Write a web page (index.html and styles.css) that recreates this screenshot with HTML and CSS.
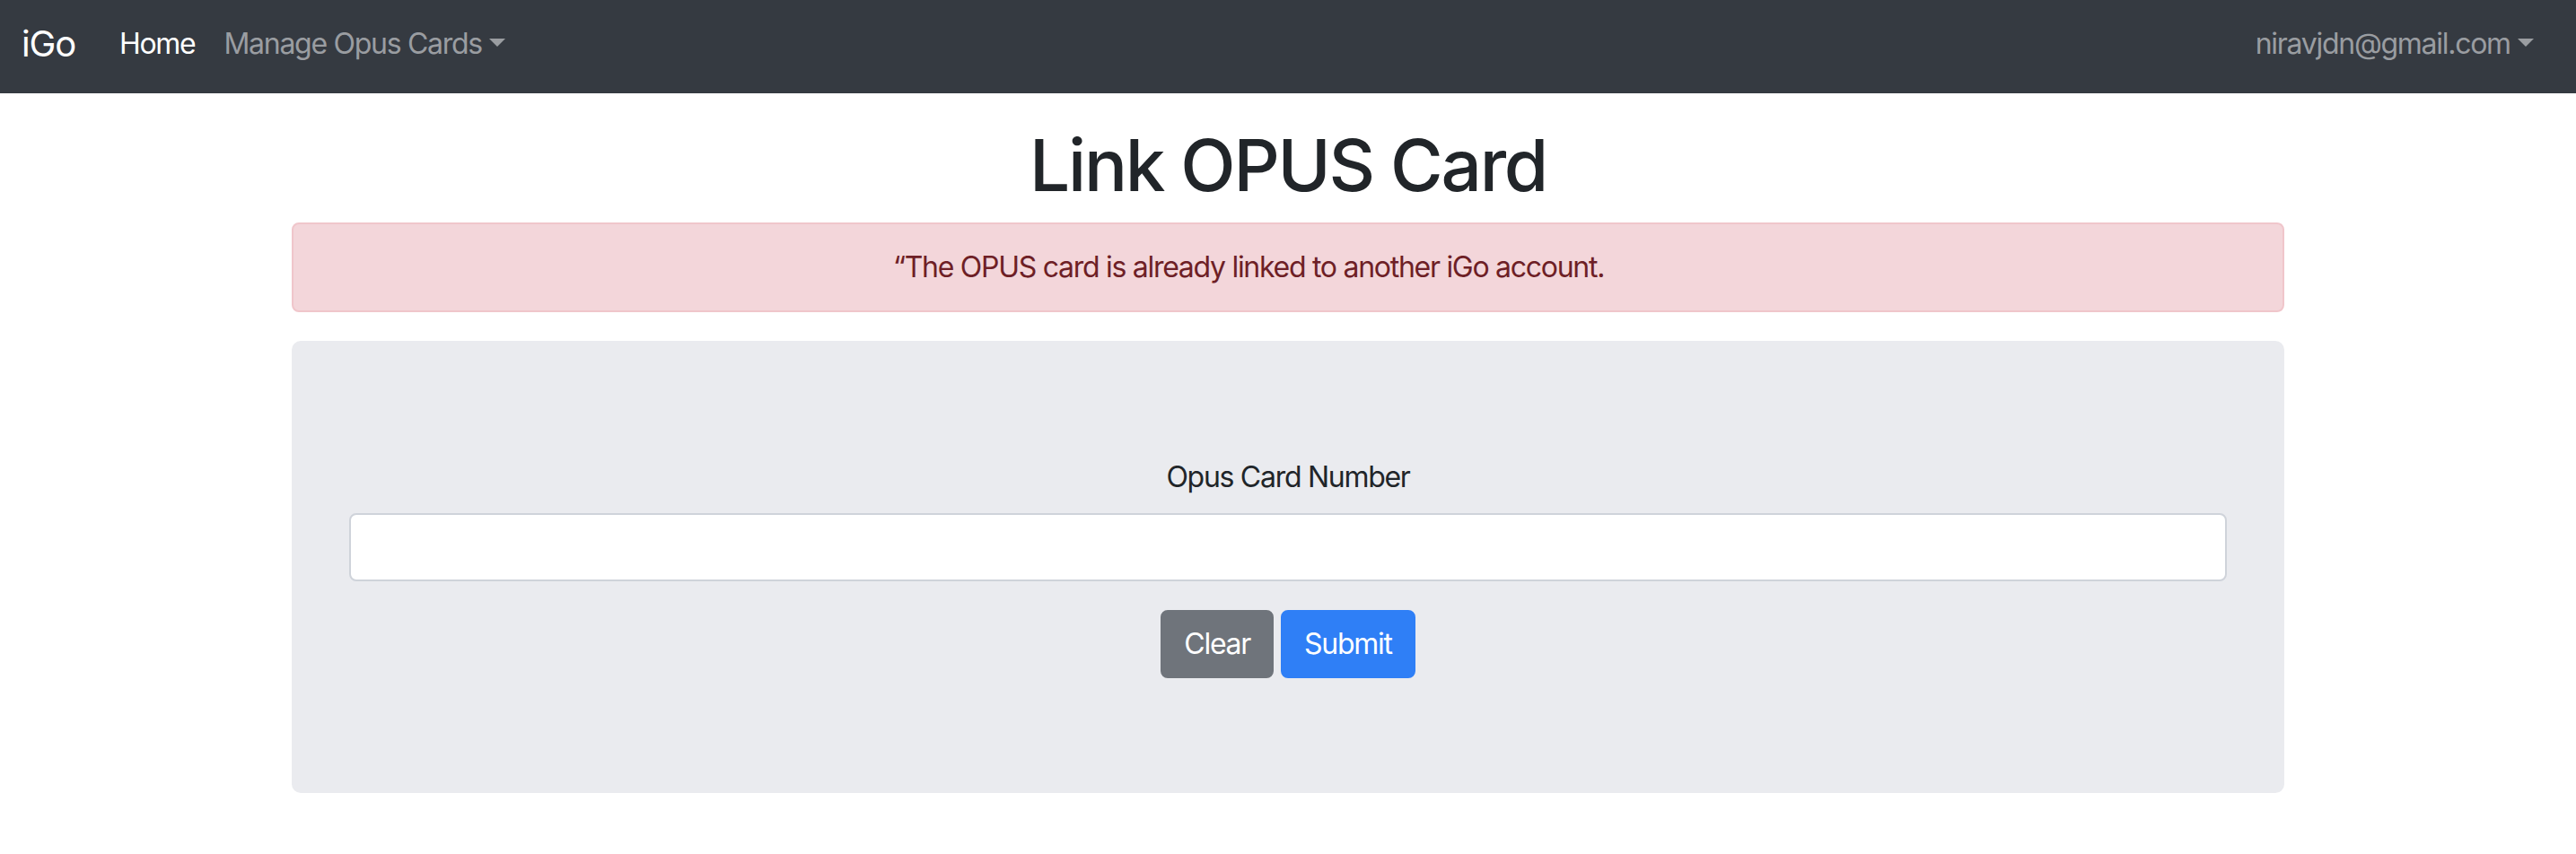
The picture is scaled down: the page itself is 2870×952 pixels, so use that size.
FILE: index.html
```html
<!DOCTYPE html>
<html lang="en">
<head>
<meta charset="utf-8">
<title>Link OPUS Card</title>
<link rel="stylesheet" href="styles.css">
</head>
<body>
<nav class="navbar">
  <a class="brand" href="#">iGo</a>
  <ul class="nav nav-main">
    <li><a class="nav-link active" href="#">Home</a></li>
    <li><a class="nav-link dropdown-toggle" href="#">Manage Opus Cards</a></li>
  </ul>
  <ul class="nav nav-right">
    <li><a class="nav-link dropdown-toggle" href="#">niravjdn@gmail.com</a></li>
  </ul>
</nav>
<main class="container">
  <h1 class="title">Link OPUS Card</h1>
  <div class="alert alert-dismissible">“The OPUS card is already linked to another iGo account.</div>
  <div class="jumbotron">
    <form class="card-form">
      <div class="form-group">
        <label class="form-label" for="opus">Opus Card Number</label>
        <input class="form-control" id="opus" type="text">
      </div>
      <div class="actions">
        <button type="button" class="btn btn-secondary">Clear</button>
        <button type="button" class="btn btn-primary">Submit</button>
      </div>
    </form>
  </div>
</main>
</body>
</html>
```
FILE: styles.css
```css
html {
  font-size: 32px;
}
body {
  margin: 0;
  font-family: Inter, "Noto Sans", "Liberation Sans", sans-serif;
  font-size: 1rem;
  line-height: 1.5;
  letter-spacing: -0.04em;
  color: #212529;
  background: #fff;
}
a {
  text-decoration: none;
}
.navbar {
  display: flex;
  align-items: center;
  height: 104px;
  box-sizing: border-box;
  padding: 0 31px 6px 24px;
  background: #353a41;
}
.brand {
  font-size: 40px;
  line-height: 1.5;
  letter-spacing: -0.03em;
  color: #fff;
  margin-right: 33px;
}
.nav {
  display: flex;
  list-style: none;
  margin: 0;
  padding: 0;
}
.nav-right {
  margin-left: auto;
}
.nav-link {
  display: block;
  padding: 16px;
  color: #9a9da1;
}
.nav-link.active {
  color: #fff;
}
.dropdown-toggle::after {
  content: "";
  display: inline-block;
  margin-left: 0.255em;
  vertical-align: 0.255em;
  border-top: 0.3em solid;
  border-right: 0.3em solid transparent;
  border-left: 0.3em solid transparent;
  border-bottom: 0;
}
.container {
  max-width: 2220px;
  padding: 0 30px;
  margin: 0 auto;
}
.title {
  margin: 32px 0 16px;
  font-size: 80px;
  font-weight: 500;
  line-height: 1.2;
  letter-spacing: -0.028em;
  text-align: center;
}
.alert {
  padding: 24px 40px;
  margin-bottom: 32px;
  border: 2px solid #f0c6cb;
  border-radius: 8px;
  background: #f3d6da;
  color: #6e1f26;
  text-align: center;
}
.alert-dismissible {
  padding-right: 128px;
}
.jumbotron {
  padding: 128px 64px;
  margin-bottom: 64px;
  background: #eaebef;
  border-radius: 10px;
}
.card-form {
  text-align: center;
}
.form-group {
  margin-bottom: 32px;
}
.form-label {
  display: block;
  margin-bottom: 16px;
}
.form-control {
  display: block;
  width: 100%;
  height: 76px;
  box-sizing: border-box;
  padding: 12px 24px;
  font: inherit;
  border: 2px solid #cfd3da;
  border-radius: 8px;
  background: #fff;
}
.actions {
  display: flex;
  justify-content: center;
  gap: 8px;
}
.btn {
  font: inherit;
  line-height: 1.5;
  letter-spacing: -0.04em;
  padding: 12px 24px;
  border: 2px solid transparent;
  border-radius: 8px;
  color: #fff;
}
.btn-secondary {
  background: #6f747b;
  border-color: #6f747b;
}
.btn-primary {
  background: #2f7ff6;
  border-color: #2f7ff6;
}
```
